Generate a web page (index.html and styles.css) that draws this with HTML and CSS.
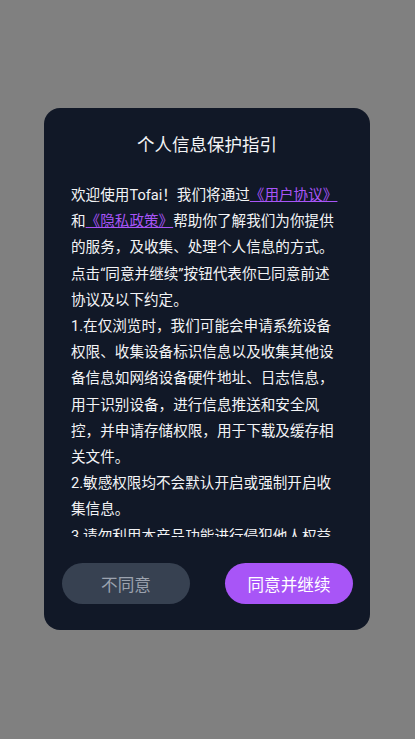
FILE: index.html
```html
<!DOCTYPE html>
<html lang="zh-CN">
<head>
<meta charset="utf-8">
<meta name="viewport" content="width=device-width, initial-scale=1">
<title>个人信息保护指引</title>
<link rel="stylesheet" href="styles.css">
</head>
<body>
<div class="overlay">
  <div class="dialog">
    <h1 class="title">个人信息保护指引</h1>
    <div class="content">
      <p>欢迎使用Tofai！我们将通过<a class="link" href="#">《用户协议》</a>和<a class="link" href="#">《隐私政策》</a>帮助你了解我们为你提供的服务，及收集、处理个人信息的方式。点击“同意并继续”按钮代表你已同意前述协议及以下约定。</p>
      <p>1.在仅浏览时，我们可能会申请系统设备权限、收集设备标识信息以及收集其他设备信息如网络设备硬件地址、日志信息，用于识别设备，进行信息推送和安全风控，并申请存储权限，用于下载及缓存相关文件。</p>
      <p>2.敏感权限均不会默认开启或强制开启收集信息。</p>
      <p>3.请勿利用本产品功能进行侵犯他人权益的行为，否则我们有权停止提供服务。</p>
    </div>
    <div class="actions">
      <button class="btn btn-decline" type="button">不同意</button>
      <button class="btn btn-accept" type="button">同意并继续</button>
    </div>
  </div>
</div>
</body>
</html>
```

FILE: styles.css
```css
html, body {
  margin: 0;
  padding: 0;
  height: 100%;
}

body {
  background: #808080;
  font-family: Roboto, "Noto Sans CJK SC", sans-serif;
  color: #f3f4f6;
}

.overlay {
  height: 100%;
  box-sizing: border-box;
  padding: 0 1px 1px 0;
  display: flex;
  align-items: center;
  justify-content: center;
}

.dialog {
  width: 326px;
  height: 522px;
  box-sizing: border-box;
  background: #111827;
  border-radius: 16px;
  padding: 25px 0 26px;
  display: flex;
  flex-direction: column;
}

.title {
  margin: 0;
  font-size: 17.5px;
  line-height: 24px;
  font-weight: 400;
  text-align: center;
  color: #f3f4f6;
}

.content {
  margin: 25px 0 0 27px;
  width: 268px;
  height: 355px;
  overflow: hidden;
  font-size: 14.6px;
  line-height: 26.2px;
}

.content p {
  margin: 0;
}

.link {
  color: #a855f7;
  text-decoration: underline;
}

.actions {
  margin-top: 26px;
  padding: 0 17px 0 18px;
  display: flex;
  justify-content: space-between;
}

.btn {
  width: 128px;
  height: 41px;
  border: none;
  border-radius: 21px;
  font-family: Roboto, "Noto Sans CJK SC", sans-serif;
  font-size: 16.6px;
  padding: 0;
}

.btn-decline {
  background: #374151;
  color: #9ca3af;
}

.btn-accept {
  background: #a855f7;
  color: #ffffff;
}
```
